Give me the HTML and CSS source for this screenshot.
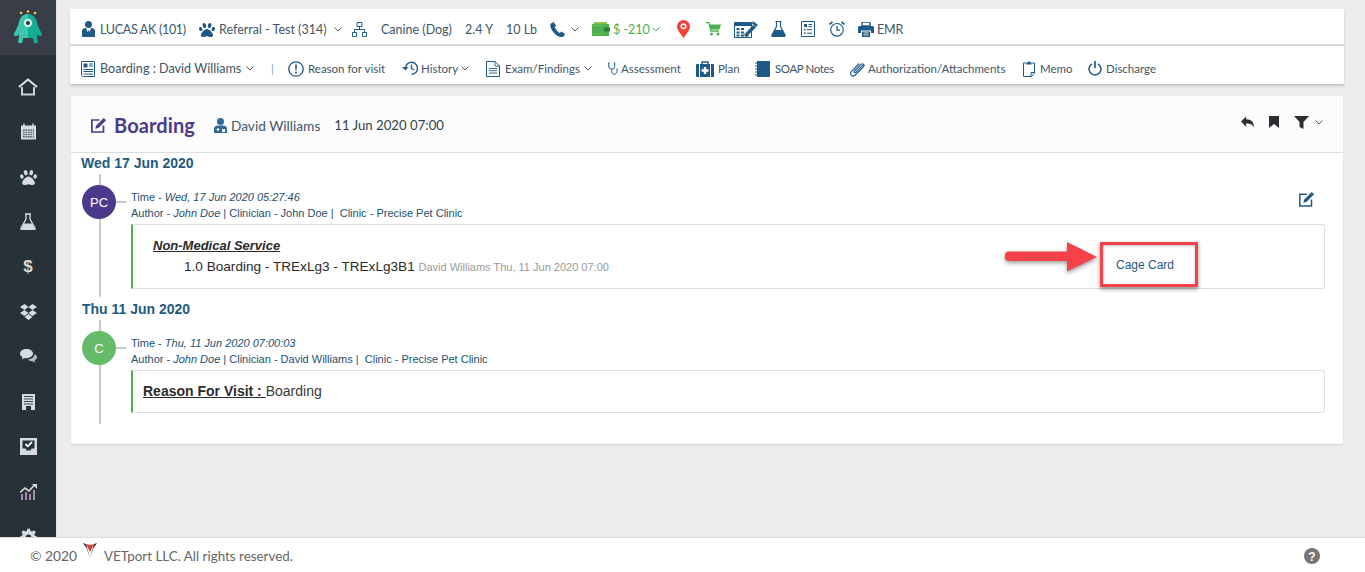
FILE: index.html
```html
<!DOCTYPE html>
<html lang="en">
<head>
<meta charset="utf-8">
<title>Boarding</title>
<link rel="stylesheet" href="styles.css">
</head>
<body>
<div class="app">
  <div class="shell">
    <aside class="sidebar">
      <div class="logo">
        <svg width="28" height="34" viewBox="0 0 28 34"><circle cx="7" cy="3" r="1.300" fill="#e8d44d"/><circle cx="14" cy="1.500" r="1.300" fill="#e8d44d"/><circle cx="21" cy="3" r="1.300" fill="#e8d44d"/><path d="M14 4c6 0 9 5 9.500 11l4.500 9c.5 2-2 2.500-3.500 1.500L23 24v3l1 6h-4l-1-5H9l-1 5H4l1-6v-3l-1.500 1.500c-1.500 1-4 .5-3.500-1.500l4.500-9C5 9 8 4 14 4z" fill="#12ad94"/><path d="M14 4C8 4 5 9 4.500 15L0 24c-.5 2 2 2.500 3.500 1.500L5 24v3l-1 6h4l1-5h5z" fill="#3fc4ad"/><circle cx="14" cy="13" r="4.200" fill="#cfeee6"/><circle cx="14" cy="13" r="2" fill="#27343c"/></svg>
      </div>
      <nav class="side-nav">
        <a class="side-item"><svg width="20" height="18" viewBox="0 0 20 18"><path d="M1 9l9-7.500L19 9" fill="none" stroke="#e3e6e8" stroke-width="2"/><path d="M4 9v7.500h12V9" fill="none" stroke="#c9ced1" stroke-width="2"/></svg></a>
        <a class="side-item"><svg width="17" height="17" viewBox="0 0 17 17"><path d="M1 2.500h15V16.500H1z" fill="#d7dade"/><path d="M3 6.500h11v8H3z" fill="#59636b"/><path d="M3 8.500h11M3 10.500h11M3 12.500h11M5 6.500v8M7.500 6.500v8M10 6.500v8M12.500 6.500v8" stroke="#d7dade" stroke-width=".8"/><path d="M4 .5v3M13 .5v3" stroke="#d7dade" stroke-width="1.500"/></svg></a>
        <a class="side-item"><svg width="17" height="16" viewBox="0 0 512 480"><use href="#paw-shape" fill="#d7dade"/></svg></a>
        <a class="side-item"><svg width="16" height="17" viewBox="0 0 16 17"><path d="M5 1h6M6 1v5L1 15c-.4 1 .2 1.600 1 1.600h12c.8 0 1.400-.6 1-1.600L10 6V1" fill="none" stroke="#d7dade" stroke-width="1.300"/><path d="M3.800 10.500h8.400L15 16.500H1z" fill="#d7dade"/></svg></a>
        <a class="side-item side-dollar">$</a>
        <a class="side-item"><svg width="17" height="16" viewBox="0 0 17 16"><path d="M4.500 0L0 3l4.500 3 4-3zM12.500 0L8.500 3l4 3L17 3zM0 9l4.500 3 4-3-4-3zM17 9l-4.500-3-4 3 4 3zM4.500 13l4 3 4-3-4-3z" fill="#d7dade"/></svg></a>
        <a class="side-item"><svg width="17" height="15" viewBox="0 0 17 15"><path d="M6.500 0C2.900 0 0 2 0 4.600c0 1.500 1 2.800 2.400 3.600L1.800 10.500l2.700-1.500c.6.100 1.300.2 2 .2 3.600 0 6.500-2 6.500-4.600S10.100 0 6.500 0z" fill="#d7dade"/><path d="M14.400 5.300c0 3-3.100 5-6.400 5.200 1 1 2.500 1.600 4.200 1.600l2.800 1.600-.5-2.300c1.500-.8 2.500-2 2.500-3.300 0-1-.9-2.100-2.600-2.800z" fill="#b9bec2"/></svg></a>
        <a class="side-item"><svg width="13" height="16" viewBox="0 0 13 16"><path d="M0 0h13v16H0z" fill="#d7dade"/><path d="M2 2.500h9M2 5h9M2 7.500h9M2 10h9" stroke="#3a464e" stroke-width="1"/><path d="M4 12h5v4H4z" fill="#263238"/></svg></a>
        <a class="side-item"><svg width="17" height="17" viewBox="0 0 17 17"><path d="M0 0h17v17H0z" fill="#d7dade"/><path d="M2.500 2.500h12v8h-3l-1 2h-4l-1-2h-3z" fill="#263238"/><path d="M5.500 6l2.300 2.300L12 4" fill="none" stroke="#fff" stroke-width="1.800"/></svg></a>
        <a class="side-item"><svg width="17" height="17" viewBox="0 0 17 17"><path d="M1 11h2v6H1zM5 9h2v8H5zM9 11h2v6H9zM13 7h2v10h-2z" fill="#a58ab4"/><path d="M0 9.500L5 5l4 3 5-5.500" fill="none" stroke="#d7dade" stroke-width="1.600"/><path d="M12 1h5v5z" fill="#d7dade"/></svg></a>
        <a class="side-item"><svg width="17" height="17" viewBox="0 0 24 24"><path fill="#d7dade" d="M10 1h4l.6 3 2.400 1 2.600-1.700 2.800 2.800L20.200 8.700l1 2.400 2.800.9v4l-3 .6-1 2.400 1.700 2.600-2.800 2.800-2.600-1.700-2.400 1-.6 2.800h-4L9.300 24l-2.400-1-2.600 1.700-2.800-2.800 1.700-2.600-1-2.400L0 16v-4l2.800-.9 1-2.400L2.100 6.100l2.800-2.800L7.500 5l2.400-1zM12 9a4 4 0 100 8 4 4 0 000-8z"/></svg></a>
      </nav>
    </aside>
    <main class="main">
      <svg class="defs" width="0" height="0"><defs><path id="paw-shape" d="M256 224c-79 0-192 122-192 199 0 35 27 57 72 57 49 0 81-25 120-25 39 0 72 25 120 25 45 0 72-22 72-57 0-77-113-199-192-199zM106 212c-11-35-42-58-70-50-27 8-42 43-31 78 11 35 42 58 70 50 28-8 42-43 31-78zM193 191c29-8 44-50 33-93C215 54 182 26 152 34c-30 8-44 50-33 93 11 44 44 72 74 64zM477 162c-28-8-59 15-70 50-11 35 3 70 31 78 28 8 59-15 70-50 11-35-3-70-31-78zM319 191c30 8 63-20 74-64 11-44-3-85-33-93-30-8-63 20-74 64-11 43 3 85 33 93z"/></defs></svg>
      <header class="top-card">
        <div class="top-row">
          <span class="ti w-patient"><svg width="13" height="16" viewBox="0 0 13 16"><circle cx="6.500" cy="3.500" r="3.500" fill="#1f5a86"/><path d="M0 16V10c0-2 1.500-2.800 4-3l1.500 4 1-2 1 2L9 7c2.500.2 4 1 4 3v6z" fill="#1f5a86"/></svg><span class="patient-name">LUCAS AK (101)</span></span>
          <span class="ti w-referral"><svg width="16" height="15" viewBox="0 0 512 480"><use href="#paw-shape" fill="#1f5a86"/></svg><span>Referral - Test (314)</span><svg class="chev" viewBox="0 0 8 5"><path d="M.5.5L4 4l3.500-3.500" fill="none" stroke="#4a5b68" stroke-width="1"/></svg></span>
          <span class="ti w-net"><svg width="15" height="15" viewBox="0 0 15 15"><path d="M5 .5h5v4H5zM.5 10.500h4v4h-4zM10.500 10.500h4v4h-4zM7.500 4.500v3M2.500 10.500v-3h10v3" fill="none" stroke="#1f5a86"/></svg></span>
          <span class="ti w-canine">Canine (Dog)</span>
          <span class="ti w-age">2.4 Y</span>
          <span class="ti w-lb">10 Lb</span>
          <span class="ti w-phone"><svg width="15" height="15" viewBox="0 0 15 15"><path d="M3.500 0L1 1.500C0 2.500 0 4 1 6.500 2.500 10 6 13.500 9.500 14.700c2 .6 3.500.3 4.500-.7l1-2-3.500-2.500-2 1.500C8 10 5.500 7 4.800 5.500L6 3.500z" fill="#1f5a86"/></svg><svg class="chev" viewBox="0 0 8 5"><path d="M.5.5L4 4l3.500-3.500" fill="none" stroke="#4a5b68" stroke-width="1"/></svg></span>
          <span class="ti w-wallet green"><svg width="18" height="14" viewBox="0 0 18 14"><path d="M0 2h17v12H0z" fill="#4caf50"/><path d="M2 0h13v2H2z" fill="#8bc34a"/><path d="M12 5.500h6v4h-6z" fill="#2e7d32"/><path d="M1.500 3.500h9M1.500 12h9" stroke="#d4e157" stroke-width=".7" stroke-dasharray="1 1"/></svg><span>$ -210</span><svg class="chev" viewBox="0 0 8 5"><path d="M.5.5L4 4l3.500-3.500" fill="none" stroke="#4caf50" stroke-width="1"/></svg></span>
          <span class="ti w-pin"><svg width="13" height="18" viewBox="0 0 13 18"><path d="M6.500 0A6.500 6.500 0 000 6.500C0 10 3.500 14 6.500 18c3-4 6.500-8 6.500-11.500A6.500 6.500 0 006.500 0z" fill="#f44336"/><circle cx="6.500" cy="6.200" r="3" fill="#fff"/><circle cx="6.500" cy="6.200" r="1.500" fill="#f44336"/></svg></span>
          <span class="ti w-cart"><svg width="15" height="14" viewBox="0 0 15 14"><path d="M0 .5h2.800L5 9h8" fill="none" stroke="#4caf50" stroke-width="1.300"/><path d="M3.500 2.500H15l-1.500 5h-9z" fill="#4caf50"/><circle cx="5.500" cy="12" r="1.500" fill="#4caf50"/><circle cx="12" cy="12" r="1.500" fill="#4caf50"/></svg></span>
          <span class="ti w-calc"><svg width="24" height="17" viewBox="0 0 24 17"><path d="M.5 1.500h17v15H.5z" fill="#fff" stroke="#1f5a86"/><path d="M.5 1.500h17v3.500H.5z" fill="#1f5a86"/><path d="M2.500 7h3v2h-3zM7 7h3v2H7zM2.500 10.500h3v2h-3zM7 10.500h3v2H7zM2.500 13.500h3v2h-3zM7 13.500h3v2H7zM11.500 13.500h3v2h-3z" fill="#1f5a86"/><path d="M10 14l9-10 3 2.500L12 16z" fill="#1f5a86"/><path d="M19 0l5 4-2 2-4-3.500z" fill="#1f5a86"/></svg></span>
          <span class="ti w-flask"><svg width="15" height="16" viewBox="0 0 15 16"><path d="M4.500.5h6M5.500.5v5L1 14c-.4 1 .2 1.500 1 1.500h11c.8 0 1.400-.5 1-1.500L9.500 5.500v-5" fill="none" stroke="#1f5a86" stroke-width="1.200"/><path d="M3.500 9h8l3 6.500H.5z" fill="#1f5a86"/></svg></span>
          <span class="ti w-news"><svg width="14" height="16" viewBox="0 0 14 16"><path d="M.5.500h13v15H.5z" fill="#fff" stroke="#1f5a86"/><path d="M3 3h3v3H3zM3 8h1.500v1.500H3zM3 11.500h1.500V13H3z" fill="#1f5a86"/><path d="M7.500 3.500H11M7.500 5.500H11M6 8.700h5M6 12.200h5" stroke="#1f5a86"/></svg></span>
          <span class="ti w-alarm"><svg width="16" height="16" viewBox="0 0 16 16"><circle cx="8" cy="8.800" r="6.300" fill="none" stroke="#1f5a86" stroke-width="1.200"/><path d="M8 5v4.200h3" fill="none" stroke="#1f5a86" stroke-width="1.200"/><path d="M.5 3.500L3.500.8M15.500 3.500L12.500.8" stroke="#1f5a86" stroke-width="1.600"/></svg></span>
          <span class="ti w-print"><svg width="16" height="15" viewBox="0 0 16 15"><path d="M4 0h8v4H4z" fill="none" stroke="#1f5a86" stroke-width="1.400"/><path d="M1.500 4h13c.8 0 1.500.7 1.500 1.500V11h-3V8.500H3V11H0V5.500C0 4.700.7 4 1.500 4z" fill="#1f5a86"/><path d="M4 9.500h8V15H4z" fill="#1f5a86"/><path d="M5.500 11h5M5.500 13h5" stroke="#fff" stroke-width=".8"/></svg><span class="emr-text">EMR</span></span>
        </div>
        <div class="sub-row">
          <span class="si w-board"><svg width="14" height="16" viewBox="0 0 14 16"><path d="M.5 13V.5h13V15.500H2.500a2 2 0 01-2-2.500z" fill="#fff" stroke="#1f5a86"/><path d="M2.500 2.500H6.500V6.500H2.500z" fill="#1f5a86"/><path d="M8 3h4M8 5h4M2.500 8.500h9.500M2.500 10.500h9.500M2.500 13h9.500" stroke="#1f5a86"/></svg><span class="board-text">Boarding : David Williams</span><svg class="chev" viewBox="0 0 8 5"><path d="M.5.5L4 4l3.500-3.500" fill="none" stroke="#4a5b68" stroke-width="1"/></svg></span>
          <span class="si w-pipe">|</span>
          <span class="si w-reason"><svg width="16" height="16" viewBox="0 0 16 16"><circle cx="8" cy="8" r="7.200" fill="none" stroke="#1f5a86" stroke-width="1.300"/><path d="M7.100 3.500h1.800l-.3 6H7.400zM7.100 10.700h1.800v1.800H7.100z" fill="#1f5a86"/></svg><span>Reason for visit</span></span>
          <span class="si w-history"><svg width="16" height="15" viewBox="0 0 16 15"><path d="M3.500 7a6 6 0 116 6.300" fill="none" stroke="#1f5a86" stroke-width="1.400"/><path d="M0 6h6.500L3.300 9.500z" fill="#1f5a86"/><path d="M9.500 3.500v4l2.800 1.500" fill="none" stroke="#1f5a86" stroke-width="1.300"/></svg><span>History</span><svg class="chev" viewBox="0 0 8 5"><path d="M.5.5L4 4l3.500-3.500" fill="none" stroke="#4a5b68" stroke-width="1"/></svg></span>
          <span class="si w-exam"><svg width="14" height="16" viewBox="0 0 14 16"><path d="M.5.500h8.500l4.500 4.500v10.500H.5z" fill="#fff" stroke="#1f5a86"/><path d="M9 .5V5h4.500M3 7.500h8M3 9.700h8M3 12h8" fill="none" stroke="#1f5a86" stroke-width=".9"/></svg><span>Exam/Findings</span><svg class="chev" viewBox="0 0 8 5"><path d="M.5.5L4 4l3.500-3.500" fill="none" stroke="#4a5b68" stroke-width="1"/></svg></span>
          <span class="si w-assess"><svg width="10" height="13" viewBox="0 0 10 13"><path d="M1.500.8H.7v3.400a3 3 0 003 3 3 3 0 003-3V.8h-.8M3.700 7.200v2.300c0 1.600 1.100 2.700 2.500 2.700s2.800-1 2.800-2.700V6.500" fill="none" stroke="#1f5a86" stroke-width="1"/></svg><span>Assessment</span></span>
          <span class="si w-plan"><svg width="18" height="16" viewBox="0 0 18 16"><path d="M6 3V1h6v2" fill="none" stroke="#1f5a86" stroke-width="1.400"/><path d="M0 4c0-.6.4-1 1-1h16c.6 0 1 .4 1 1v11c0 .6-.4 1-1 1H1c-.6 0-1-.4-1-1z" fill="#1f5a86"/><path d="M3 3h1v13H3zM14 3h1v13h-1z" fill="#fff"/><path d="M7.800 6h2.400v2.300h2.300v2.400h-2.300V13H7.800v-2.300H5.500V8.300h2.300z" fill="#fff"/></svg><span>Plan</span></span>
          <span class="si w-soap"><svg width="15" height="16" viewBox="0 0 15 16"><path d="M2 0h13v16H2z" fill="#1f5a86"/><path d="M0 2h4M0 5h4M0 8h4M0 11h4M0 14h4" stroke="#1f5a86" stroke-width="1.200"/></svg><span class="soap-text">SOAP Notes</span></span>
          <span class="si w-auth"><svg width="15" height="16" viewBox="0 0 15 16"><path d="M13.300 3.800L5.800 11.300c-1 1-2.300-.3-1.300-1.300L11 3.500c1.800-1.800 4.200.5 2.400 2.400L5.300 14c-2.800 2.800-6.400-.8-3.700-3.700L9.300 2.500" fill="none" stroke="#1f5a86" stroke-width="1.100"/></svg><span>Authorization/Attachments</span></span>
          <span class="si w-memo"><svg width="12" height="16" viewBox="0 0 12 16"><path d="M3.500 2H.5v13.500h8L11.500 12V2h-3" fill="#fff" stroke="#1f5a86"/><path d="M3.500 3.500V1.500h1.500V.5h2v1h1.500v2z" fill="#1f5a86"/><path d="M8 15v-3.500h3.500" fill="none" stroke="#1f5a86"/></svg><span>Memo</span></span>
          <span class="si w-disch"><svg width="14" height="15" viewBox="0 0 14 15"><path d="M4 2.800a6 6 0 106 0" fill="none" stroke="#1f5a86" stroke-width="1.500"/><path d="M7 0v7" stroke="#1f5a86" stroke-width="1.700"/></svg><span>Discharge</span></span>
        </div>
      </header>

      <section class="panel">
        <div class="panel-head">
          <svg class="edit-big" width="16" height="16" viewBox="0 0 16 16"><path d="M12.500 8.500v6.500H.9V3h7.500" fill="none" stroke="#4b3a8c" stroke-width="1.700"/><path d="M5 8.700L12.700.9l2.400 2.400-7.700 7.800-3 .6z" fill="#4b3a8c"/></svg>
          <h1 class="panel-title">Boarding</h1>
          <svg class="doc-icon" width="13" height="15" viewBox="0 0 13 15"><circle cx="6.500" cy="3.500" r="3.500" fill="#2f6a94"/><path d="M0 15V10.500C0 8.500 2 7.500 4 7.500h5c2 0 4 1 4 3V15z" fill="#2f6a94"/><circle cx="4" cy="11.500" r="1.300" fill="#fff"/><path d="M8 11h3v3H8z" fill="#fff"/></svg>
          <span class="panel-doc">David Williams</span>
          <span class="panel-date">11 Jun 2020 07:00</span>
          <div class="panel-tools">
            <svg width="13" height="12" viewBox="0 0 14 12"><path d="M5.500 0v3C11 3 14 6 14 12c-1.500-3.500-4-4.500-8.500-4.500V11L0 5.500z" fill="#2b2f33"/></svg>
            <svg width="10" height="12" viewBox="0 0 10 12"><path d="M0 0h10v12L5 8l-5 4z" fill="#2b2f33"/></svg>
            <span class="filter"><svg width="15" height="13" viewBox="0 0 15 13"><path d="M0 0h15L9.500 6v7l-4-2V6z" fill="#2b2f33"/></svg><svg class="chev" viewBox="0 0 8 5"><path d="M.5.5L4 4l3.500-3.500" fill="none" stroke="#4a5b68" stroke-width="1"/></svg></span>
          </div>
        </div>

        <h2 class="day">Wed 17 Jun 2020</h2>
        <div class="event event-first">
          <div class="avatar-col"><span class="avatar purple">PC</span></div>
          <div class="event-body">
            <div class="meta-row">
              <div class="meta">
                <div>Time - <em>Wed, 17 Jun 2020 05:27:46</em></div>
                <div>Author - <em>John Doe</em> | Clinician - John Doe | &nbsp;Clinic - Precise Pet Clinic</div>
              </div>
              <svg class="edit-small" width="16" height="16" viewBox="0 0 16 16"><path d="M12.500 8.500v6.500H.8V3.300h7" fill="none" stroke="#1f5a86" stroke-width="1.500"/><path d="M5 8.700L12.700.9l2.400 2.400-7.700 7.800-3 .6z" fill="#1f5a86"/></svg>
            </div>
            <div class="note note-service">
              <div class="service-text">
                <div class="service-title">Non-Medical Service</div>
                <div class="service-line">1.0 Boarding - TRExLg3 - TRExLg3B1 <small>David Williams Thu, 11 Jun 2020 07:00</small></div>
              </div>
              <div class="cage-box">
                <svg class="arrow" width="96" height="34" viewBox="0 0 96 34"><path d="M4 11.500h58V2l30 15-30 14.500V21H4a4.700 4.700 0 010-9.500z" fill="#f44248"/></svg>
                <a class="cage-link">Cage Card</a>
              </div>
            </div>
          </div>
        </div>

        <h2 class="day day-second">Thu 11 Jun 2020</h2>
        <div class="event event-last">
          <div class="avatar-col"><span class="avatar green-bg">C</span></div>
          <div class="event-body">
            <div class="meta">
              <div>Time - <em>Thu, 11 Jun 2020 07:00:03</em></div>
              <div>Author - <em>John Doe</em> | Clinician - David Williams | &nbsp;Clinic - Precise Pet Clinic</div>
            </div>
            <div class="note note-reason"><strong>Reason For Visit : </strong>Boarding</div>
          </div>
        </div>
      </section>
    </main>
  </div>
  <footer class="footer">
    <span class="copy">© 2020</span>
    <svg class="v-logo" width="14" height="15" viewBox="0 0 14 15"><path d="M0 0l3 1 4 14L3.500 5z" fill="#2b2f33"/><path d="M14 0l-3 1L7 15l3.500-10z" fill="#2b2f33"/><path d="M3 1l4 1 4-1-4 8z" fill="#e53935"/></svg>
    <span class="copy copy-main">VETport LLC. All rights reserved.</span>
    <svg class="help" width="16" height="16" viewBox="0 0 16 16"><circle cx="8" cy="8" r="8" fill="#757575"/><text x="8" y="12.500" text-anchor="middle" class="help-q">?</text></svg>
  </footer>
</div>
</body>
</html>
```
FILE: styles.css
```css
* { box-sizing: border-box; }
html, body { margin: 0; height: 100%; }
body { background: #ececec; font-family: "Liberation Sans", Arial, sans-serif; overflow: hidden; }
svg { display: block; flex: none; }
.defs { position: absolute; }
.app { height: 572px; display: flex; flex-direction: column; }
.shell { flex: 1; display: flex; min-height: 0; overflow: hidden; }

/* sidebar */
.sidebar { width: 57px; flex: none; background: #263238; border-right: 1px solid #e2e2e2; overflow: hidden; }
.logo { height: 55px; background: #383d48; display: flex; justify-content: center; padding-top: 10px; }
.side-nav { padding-top: 9px; display: flex; flex-direction: column; }
.side-item { height: 45px; flex: none; display: flex; align-items: center; justify-content: center; }
.side-dollar { color: #d7dade; font: bold 17px "Liberation Sans", sans-serif; }

/* main */
.main { flex: 1; min-width: 0; padding: 9px 21px 0 13px; }
.top-card { background: #fff; box-shadow: 0 2px 2px #c4c4c4; height: 75px; }
.top-row, .sub-row { display: flex; align-items: center; font-family: "Lato", "Noto Sans", sans-serif; color: #3e5566; }
.top-row { height: 37px; padding-top: 5px; border-bottom: 2px solid #d8d8d8; font-size: 12.500px; }
.sub-row { height: 38px; padding-top: 7px; font-size: 11.500px; }
.ti, .si { display: flex; align-items: center; flex: none; white-space: nowrap; }
.chev { width: 8px; height: 5px; }
.green { color: #4caf50; }

.w-patient { margin-left: 12px; width: 117px; gap: 5px; }
.patient-name { letter-spacing: -.3px; }
.emr-text { letter-spacing: -.2px; }
.w-referral { width: 153px; gap: 4px; }
.w-referral .chev { margin-left: 3px; }
.w-net { width: 29px; }
.w-canine { width: 84px; }
.w-age { width: 41px; }
.w-lb { width: 44px; }
.w-phone { width: 42px; gap: 6px; }
.w-wallet { width: 85px; gap: 3px; }
.w-wallet .chev { margin-left: -1px; }
.w-pin { width: 29px; }
.w-cart { width: 28px; }
.w-calc { width: 37px; }
.w-flask { width: 30px; }
.w-news { width: 28px; }
.w-alarm { width: 29px; }
.w-print { gap: 3px; }

.w-board { margin-left: 11px; width: 190px; gap: 5px; }
.board-text { font-size: 12.600px; }
.w-pipe { width: 17px; color: #7aa2c0; }
.w-reason { width: 114px; gap: 4px; }
.w-history { width: 84px; gap: 3px; }
.w-exam { width: 122px; gap: 5px; }
.w-exam .chev { margin-left: -1px; }
.w-assess { width: 88px; gap: 3px; }
.w-plan { width: 59px; gap: 4px; }
.w-soap { width: 95px; gap: 5px; }
.soap-text { letter-spacing: -.4px; }
.w-auth { width: 173px; gap: 3px; }
.w-memo { width: 65px; gap: 5px; }
.w-disch { gap: 4px; }

/* panel */
.panel { margin: 12px 1px 0; height: 348px; background: #fff; border-radius: 2px; box-shadow: 0 1px 2px #d4d4d4; padding-bottom: 20px; }
.panel-head { height: 57px; background: #fcfcfc; border-bottom: 1px solid #dedede; display: flex; align-items: center; padding: 2px 20px 0 20px; font-family: "Lato", "Noto Sans", sans-serif; }
.panel-title { margin: 0 0 0 7px; font-size: 20px; font-weight: 700; color: #4b3a8c; letter-spacing: .1px; }
.doc-icon { margin-left: 19px; }
.panel-doc { margin-left: 4px; font-size: 13.700px; color: #3e5566; }
.panel-date { margin-left: 14px; font-size: 13.200px; color: #33424e; }
.panel-tools { margin: 0 0 6px auto; display: flex; align-items: center; gap: 15px; }
.filter { display: flex; align-items: center; gap: 6px; }

.day { margin: 0; height: 21px; line-height: 21px; padding-left: 10px; font-size: 14px; font-weight: bold; color: #1f5a80; }
.day-second { padding-left: 11px; margin-top: 2px; }
.event { display: flex; padding-top: 11px; background: linear-gradient(#c9c9c9, #c9c9c9) 28px 0 / 2px 100% no-repeat; margin-right: 18px; }
.event-first { padding-bottom: 8px; }
.event-last { padding-bottom: 11px; }
.avatar-col { width: 60px; padding-left: 11px; flex: none; }
.avatar { position: relative; width: 34px; height: 34px; border-radius: 50%; display: flex; align-items: center; justify-content: center; color: #fff; font-size: 13px; }
.avatar::after { content: ""; position: absolute; left: 34px; top: 16px; width: 10px; height: 2px; background: #c9c9c9; }
.purple { background: #4b3a8c; }
.green-bg { background: #66bb6a; }
.event-body { flex: 1; min-width: 0; }
.meta-row { display: flex; justify-content: space-between; }
.meta { font-size: 11px; line-height: 16px; color: #24506e; padding-top: 4px; }
.edit-small { margin: 6px 10px 0 0; }
.note { margin-top: 3px; background: #fff; border: 1px solid #dddddd; border-left: 2px solid #4caf50; border-radius: 0 3px 3px 0; }
.note-service { height: 65px; display: flex; justify-content: space-between; color: #2b2b2b; }
.service-text { padding: 12px 0 0 20px; }
.service-title { font-size: 13px; font-weight: bold; font-style: italic; text-decoration: underline; line-height: 17px; }
.service-line { padding-left: 31px; font-size: 13.600px; line-height: 20px; margin-top: 3px; }
.service-line small { font-size: 11px; color: #9a9a9a; }
.cage-box { position: relative; width: 98px; height: 45px; margin: 17px 126px 0 0; border: 3px solid #f44248; box-shadow: 0 2px 4px rgba(0,0,0,.45), inset 0 1px 3px rgba(0,0,0,.25); display: flex; align-items: center; padding: 1px 0 0 13px; }
.cage-link { font-size: 12px; color: #1f5a80; }
.arrow { position: absolute; left: -98px; top: -5px; filter: drop-shadow(0 2px 2px rgba(0,0,0,.4)); }
.note-reason { height: 43px; display: flex; align-items: center; padding: 0 0 2px 10px; font-size: 14px; color: #3a3a3a; white-space: pre; }
.note-reason strong { color: #2b2b2b; text-decoration: underline; }

/* footer */
.footer { height: 35px; flex: none; background: #fff; border-top: 1px solid #dcdcdc; display: flex; align-items: center; padding: 1px 45px 0 30px; font-family: "Lato", "Noto Sans", sans-serif; font-size: 13.800px; color: #666; }
.copy-main { font-size: 13.400px; }
.v-logo { margin: -10px 7px 0 6px; }
.help { margin-left: auto; }
.help-q { font: bold 12px "Liberation Sans", sans-serif; fill: #fff; }
```
